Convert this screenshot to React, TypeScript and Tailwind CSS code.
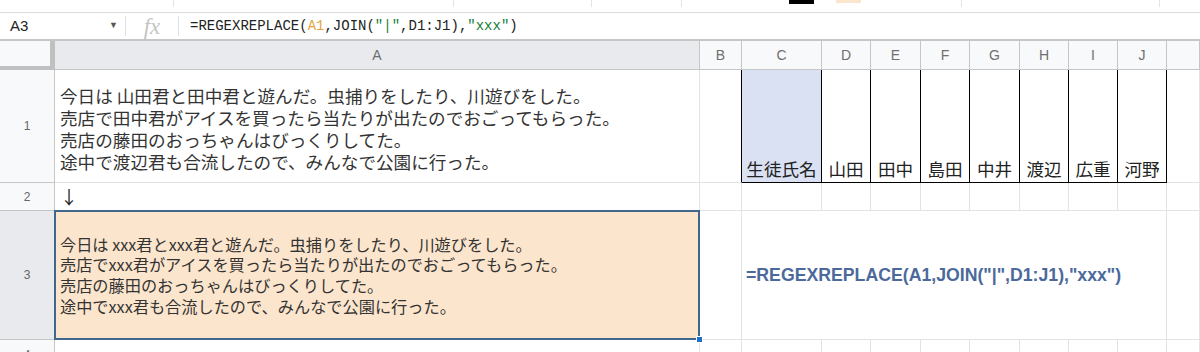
import React from 'react';

const jp = { fontFamily: '"Noto Sans CJK JP", "Noto Sans", sans-serif' };
const arial = { fontFamily: '"Liberation Sans", Arial, sans-serif' };
const mono = { fontFamily: '"Liberation Mono", "DejaVu Sans Mono", monospace' };

const cols = ['A', 'B', 'C', 'D', 'E', 'F', 'G', 'H', 'I', 'J', ''];
const names = ['山田', '田中', '島田', '中井', '渡辺', '広重', '河野'];

const row1 = [
  '今日は 山田君と田中君と遊んだ。虫捕りをしたり、川遊びをした。',
  '売店で田中君がアイスを買ったら当たりが出たのでおごってもらった。',
  '売店の藤田のおっちゃんはびっくりしてた。',
  '途中で渡辺君も合流したので、みんなで公園に行った。',
];

const row3 = [
  '今日は xxx君とxxx君と遊んだ。虫捕りをしたり、川遊びをした。',
  '売店でxxx君がアイスを買ったら当たりが出たのでおごってもらった。',
  '売店の藤田のおっちゃんはびっくりしてた。',
  '途中でxxx君も合流したので、みんなで公園に行った。',
];

const grid = 'border-r border-b border-[#e2e3e3]';
const rowHead = 'flex items-center justify-center border-r border-b border-[#c4c7c5] text-[12px] text-[#666]';

export default function App() {
  return (
    <div className="w-[1200px] h-[352px] overflow-hidden bg-white text-[#222]">
      {/* ツールバーの端 */}
      <div className="h-[13px] border-b border-[#dadce0] flex items-start">
        <div className="ml-[173px] w-px h-[7px] bg-[#e3e3e3]" />
        <div className="ml-[279px] w-px h-[7px] bg-[#e3e3e3]" />
        <div className="ml-[137px] w-px h-[7px] bg-[#e3e3e3]" />
        <div className="ml-[89px] w-px h-[7px] bg-[#e3e3e3]" />
        <div className="ml-[107px] w-[25px] h-[4px] bg-black" />
        <div className="ml-[22px] w-[25px] h-[3px] bg-[#fce5cd]" />
        <div className="ml-[100px] w-px h-[7px] bg-[#e3e3e3]" />
        <div className="ml-[197px] w-px h-[7px] bg-[#e3e3e3]" />
      </div>

      {/* 数式バー */}
      <div className="h-[28px] flex items-center border-b-2 border-[#c4c7c5]">
        <div className="w-[125px] flex items-center justify-between pl-[10px] pr-[7px] text-[15px]" style={arial}>
          <span>A3</span>
          <span className="text-[9px] text-[#555]">▼</span>
        </div>
        <div className="w-px h-[20px] bg-[#e0e0e0]" />
        <div className="w-[52px] flex justify-center">
          <span className="italic text-[23px] leading-none text-[#c4c4c4]" style={{ fontFamily: '"Liberation Serif", serif' }}>fx</span>
        </div>
        <div className="w-px h-[20px] bg-[#e0e0e0]" />
        <div className="pl-[11px] text-[14px] whitespace-pre" style={mono}>
          =REGEXREPLACE(<span className="text-[#e2a640]">A1</span>,JOIN(<span className="text-[#188038]">"|"</span>,D1:J1),<span className="text-[#188038]">"xxx"</span>)
        </div>
      </div>

      {/* シート */}
      <div
        className="grid grid-cols-[55px_645px_42px_80px_49px_50px_49px_50px_49px_49px_49px_1fr] grid-rows-[29px_113px_28px_129px_40px]"
        style={arial}
      >
        {/* 列見出し */}
        <div className="bg-[#f8f9fa] border-r-[5px] border-b-[4px] border-[#c0c0c0]" />
        {cols.map((c) => (
          <div
            key={c || 'K'}
            className={`flex items-center justify-center border-r border-b border-[#c4c7c5] text-[14px] text-[#6f6f6f] ${
              c === 'A' ? 'bg-[#e8eaed]' : 'bg-[#f8f9fa]'
            }`}
          >
            {c}
          </div>
        ))}

        {/* 1行目 */}
        <div className={`${rowHead} bg-[#f8f9fa]`}>1</div>
        <div className={`${grid} pl-[5px] pt-[15px] text-[17.6px] leading-[22px] text-[#333]`} style={jp}>
          {row1.map((l) => (
            <div key={l} className="whitespace-nowrap">{l}</div>
          ))}
        </div>
        <div className="border-r border-r-black border-b border-b-[#e2e3e3]" />
        <div className="bg-[#d9e1f2] border-r border-b border-black flex items-end justify-center pb-[3px] text-[17.6px] leading-[20px]" style={jp}>
          生徒氏名
        </div>
        {names.map((n) => (
          <div key={n} className="border-r border-b border-black flex items-end justify-center pb-[3px] text-[17.6px] leading-[20px]" style={jp}>
            {n}
          </div>
        ))}
        <div className={grid} />

        {/* 2行目 */}
        <div className={`${rowHead} bg-[#f8f9fa]`}>2</div>
        <div className={`${grid} pl-[5px] pt-[3px] text-[18px] leading-[20px]`} style={jp}>↓</div>
        {Array.from({ length: 10 }).map((_, i) => (
          <div key={i} className={grid} />
        ))}

        {/* 3行目 */}
        <div className={`${rowHead} bg-[#e8eaed]`}>3</div>
        <div className={`${grid} relative bg-[#fce5cd] pl-[5px] flex flex-col justify-center text-[16.2px] leading-[20.7px] text-[#333]`} style={jp}>
          {row3.map((l) => (
            <div key={l} className="whitespace-nowrap">{l}</div>
          ))}
          <div className="absolute -left-px -top-px right-[-1px] bottom-[-1px] border-2 border-[#41678f]" />
          <div className="absolute right-[-4px] bottom-[-4px] w-[7px] h-[7px] bg-[#1f6fd1] border border-white" />
        </div>
        <div className={grid} />
        <div className={`${grid} col-span-8 flex items-center pl-[4px] text-[17.7px] font-bold text-[#4b6a9b] whitespace-nowrap`}>
          =REGEXREPLACE(A1,JOIN("|",D1:J1),"xxx")
        </div>
        <div className={grid} />

        {/* 4行目 */}
        <div className={`${rowHead} bg-[#f8f9fa] items-start pt-[6px]`}>4</div>
        {Array.from({ length: 11 }).map((_, i) => (
          <div key={i} className={grid} />
        ))}
      </div>
    </div>
  );
}
